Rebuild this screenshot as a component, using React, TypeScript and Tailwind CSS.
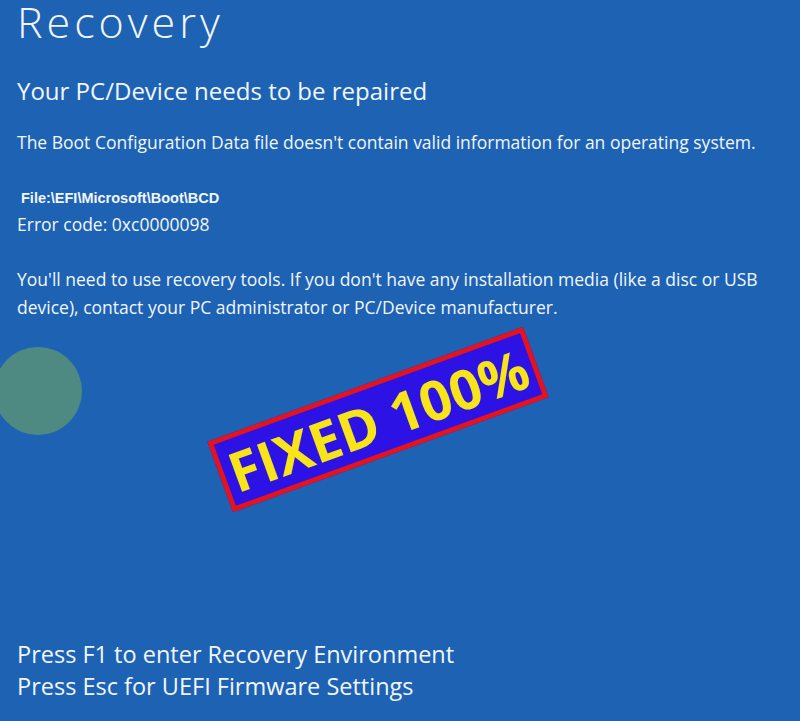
export default function App() {
  return (
    <div className="relative w-[800px] h-[721px] overflow-hidden bg-[#1e62b4] text-[#f1f6fd] font-['Open_Sans',sans-serif]">
      <div className="flex flex-col h-full pl-[17px]">
        <h1 className="text-[43px] font-light leading-[42px] tracking-[4px] pt-[1px]">Recovery</h1>
        <h2 className="text-[24px] font-normal leading-[30px] mt-[33px]">Your PC/Device needs to be repaired</h2>
        <p className="text-[17.5px] leading-[24px] mt-[24px]">
          The Boot Configuration Data file doesn't contain valid information for an operating system.
        </p>
        <p className="text-[14.5px] font-bold leading-[18px] mt-[35px] pl-[4px] font-['Liberation_Sans',sans-serif]">
          File:\EFI\Microsoft\Boot\BCD
        </p>
        <p className="text-[17.5px] leading-[24px] mt-[5px]">Error code: 0xc0000098</p>
        <p className="text-[17.5px] leading-[28px] mt-[29px] w-[760px]">
          You'll need to use recovery tools. If you don't have any installation media (like a disc or USB device), contact your PC administrator or PC/Device manufacturer.
        </p>
        <div className="mt-auto mb-[19px] text-[23.5px] leading-[32px]">
          <p>Press F1 to enter Recovery Environment</p>
          <p>Press Esc for UEFI Firmware Settings</p>
        </div>
      </div>

      {/* overlay decoration */}
      <div className="absolute left-[-6px] top-[347px] w-[88px] h-[88px] rounded-full bg-[#4e8a82]"></div>

      <div className="absolute left-[210px] top-[382px] w-[336px] h-[75px] -rotate-20 border-[5px] border-[#e3141e] bg-[#2c12e4] flex items-center justify-center">
        <span className="text-[55px] font-bold leading-none text-[#f7e51a] whitespace-nowrap">FIXED 100%</span>
      </div>
    </div>
  );
}
